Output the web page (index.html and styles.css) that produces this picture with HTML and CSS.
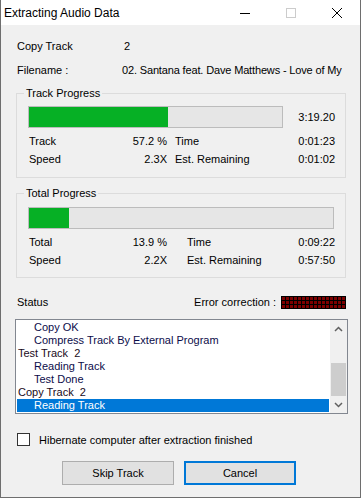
FILE: index.html
```html
<!DOCTYPE html>
<html lang="en">
<head>
    <meta charset="UTF-8" />
    <title>Extracting Audio Data</title>
    <link rel="stylesheet" href="styles.css">
</head>
<body>
    <div class="window">
        <div class="titlebar">
            <span class="title">Extracting Audio Data</span>
            <div class="controls">
                <span class="ctrl">
                    <svg width="10" height="10" viewBox="0 0 10 10"><path d="M0 5.5h10" stroke="#000" stroke-width="1"/></svg>
                </span>
                <span class="ctrl">
                    <svg width="10" height="10" viewBox="0 0 10 10"><rect x="0.5" y="0.5" width="9" height="9" fill="none" stroke="#cccccc"/></svg>
                </span>
                <span class="ctrl">
                    <svg width="10" height="10" viewBox="0 0 10 10"><path d="M0 0L10 10M10 0L0 10" stroke="#000" stroke-width="1"/></svg>
                </span>
            </div>
        </div>

        <div class="content">
            <div class="info-row">
                <span class="info-label">Copy Track</span>
                <span class="info-value info-num">2</span>
            </div>
            <div class="info-row">
                <span class="info-label">Filename :</span>
                <span class="info-value info-file">02. Santana feat. Dave Matthews - Love of My</span>
            </div>

            <fieldset class="group group-track">
                <legend>Track Progress</legend>
                <div class="bar-row">
                    <div class="bar bar-short"><div class="bar-fill" style="width: 54.8%"></div></div>
                    <span class="bar-time">3:19.20</span>
                </div>
                <div class="stats-row first">
                    <div class="pair"><span>Track</span><span>57.2 %</span></div>
                    <div class="pair pair-right"><span>Time</span><span>0:01:23</span></div>
                </div>
                <div class="stats-row">
                    <div class="pair"><span>Speed</span><span>2.3X</span></div>
                    <div class="pair pair-right"><span>Est. Remaining</span><span>0:01:02</span></div>
                </div>
            </fieldset>

            <fieldset class="group group-total">
                <legend>Total Progress</legend>
                <div class="bar-row">
                    <div class="bar bar-long"><div class="bar-fill" style="width: 13.2%"></div></div>
                </div>
                <div class="stats-row first">
                    <div class="pair"><span>Total</span><span>13.9 %</span></div>
                    <div class="pair pair-wide"><span>Time</span><span>0:09:22</span></div>
                </div>
                <div class="stats-row">
                    <div class="pair"><span>Speed</span><span>2.2X</span></div>
                    <div class="pair pair-wide"><span>Est. Remaining</span><span>0:57:50</span></div>
                </div>
            </fieldset>

            <div class="status-row">
                <span>Status</span>
                <span class="err-label">Error correction :</span>
                <span class="led"></span>
            </div>

            <div class="listbox">
                <div class="items">
                    <div class="item child">Copy OK</div>
                    <div class="item child">Compress Track By External Program</div>
                    <div class="item parent">Test Track&nbsp; 2</div>
                    <div class="item child">Reading Track</div>
                    <div class="item child">Test Done</div>
                    <div class="item parent">Copy Track&nbsp; 2</div>
                    <div class="item child selected">Reading Track</div>
                </div>
                <div class="scrollbar">
                    <span class="arrow">
                        <svg width="9" height="6" viewBox="0 0 9 6"><path d="M1 5L4.5 1.5L8 5" fill="none" stroke="#606060" stroke-width="1.5"/></svg>
                    </span>
                    <div class="track"><div class="thumb"></div></div>
                    <span class="arrow">
                        <svg width="9" height="6" viewBox="0 0 9 6"><path d="M1 1L4.5 4.5L8 1" fill="none" stroke="#606060" stroke-width="1.5"/></svg>
                    </span>
                </div>
            </div>

            <label class="check-row">
                <span class="checkbox"></span>
                <span>Hibernate computer after extraction finished</span>
            </label>

            <div class="buttons">
                <button class="btn">Skip Track</button>
                <button class="btn btn-default">Cancel</button>
            </div>
        </div>
    </div>
</body>
</html>
```

FILE: styles.css
```css
* {
    box-sizing: border-box;
}
body {
    margin: 0;
    background: #fff;
    font-family: "Liberation Sans", Arial, sans-serif;
    font-size: 11px;
    color: #000;
}
.window {
    width: 361px;
    height: 498px;
    border: 1px solid #6e6e6e;
    border-top: none;
    display: flex;
    flex-direction: column;
}
.titlebar {
    height: 25px;
    flex: none;
    background: #fff;
    display: flex;
    align-items: center;
    padding-left: 3px;
    font-size: 12px;
}
.controls {
    margin-left: auto;
    display: flex;
    height: 100%;
}
.ctrl {
    width: 46px;
    display: flex;
    align-items: center;
    justify-content: center;
}
.content {
    flex: 1;
    background: #f0f0f0;
    padding: 9px 0 0 15px;
}
.info-row {
    height: 24px;
    display: flex;
    align-items: center;
    padding-left: 1px;
    white-space: nowrap;
}
.info-label {
    width: 105px;
}
.info-num {
    padding-left: 2px;
}
.info-file {
    letter-spacing: -0.15px;
}

/* group boxes */
.group {
    width: 330px;
    margin: 5px 0 0 0;
    padding: 7px 10px 9px 11px;
    border: 1px solid #dcdcdc;
    min-width: 0;
}
.group-total {
    margin-top: 9px;
    padding-top: 8px;
    padding-bottom: 8px;
}
.group legend {
    padding: 0 2px;
    margin-left: -4px;
    line-height: 12px;
}
.bar-row {
    height: 22px;
    display: flex;
    align-items: center;
}
.bar {
    height: 22px;
    border: 1px solid #bcbcbc;
    background: #e6e6e6;
}
.bar-short {
    width: 255px;
}
.bar-long {
    flex: 1;
    margin-right: 1px;
}
.bar-fill {
    height: 100%;
    background: #06b025;
}
.bar-time {
    flex: 1;
    text-align: right;
}
.stats-row {
    height: 18px;
    display: flex;
    align-items: center;
    padding-left: 1px;
}
.stats-row.first {
    margin-top: 4px;
}
.pair {
    display: flex;
    justify-content: space-between;
    width: 138px;
}
.pair-right {
    flex: 1;
    margin-left: 8px;
}
.pair-wide {
    flex: 1;
    margin-left: 20px;
}

/* status */
.status-row {
    width: 330px;
    margin-top: 17px;
    height: 14px;
    display: flex;
    align-items: center;
    padding-left: 1px;
}
.err-label {
    margin-left: auto;
    margin-right: 5px;
}
.led {
    width: 65px;
    height: 13px;
    background-color: #7c0000;
    background-image:
        repeating-linear-gradient(to right, #000 0 1px, transparent 1px 4px),
        repeating-linear-gradient(to bottom, #000 0 1px, transparent 1px 4px);
    border-right: 1px solid #000;
    border-bottom: 1px solid #000;
}
.listbox {
    margin: 10px 0 0 -1px;
    width: 333px;
    height: 95px;
    border: 1px solid #828790;
    background: #fff;
    display: flex;
}
.items {
    flex: 1;
    padding: 1px 1px 0 1px;
}
.item {
    height: 13px;
    line-height: 13px;
    white-space: nowrap;
}
.parent {
    padding-left: 1px;
    color: #1a0a1a;
}
.child {
    padding-left: 17px;
    color: #0c0c4a;
}
.selected {
    background: #0078d7;
    color: #fff;
}
.scrollbar {
    width: 17px;
    background: #f0f0f0;
    display: flex;
    flex-direction: column;
}
.arrow {
    height: 17px;
    display: flex;
    align-items: center;
    justify-content: center;
}
.track {
    flex: 1;
    display: flex;
    flex-direction: column;
    justify-content: flex-end;
    padding: 0 1px;
}
.thumb {
    height: 33px;
    background: #cdcdcd;
}

/* bottom */
.check-row {
    margin-top: 19px;
    height: 13px;
    display: flex;
    align-items: center;
    padding-left: 1px;
}
.checkbox {
    width: 13px;
    height: 13px;
    border: 1px solid #333;
    background: #fff;
    margin-right: 9px;
}
.buttons {
    margin: 15px 0 0 46px;
    display: flex;
    gap: 10px;
}
.btn {
    width: 112px;
    height: 24px;
    background: #e1e1e1;
    border: 1px solid #adadad;
    font-family: "Liberation Sans", Arial, sans-serif;
    font-size: 11px;
    color: #000;
    padding: 0;
}
.btn-default {
    border: 2px solid #0078d7;
}
```
